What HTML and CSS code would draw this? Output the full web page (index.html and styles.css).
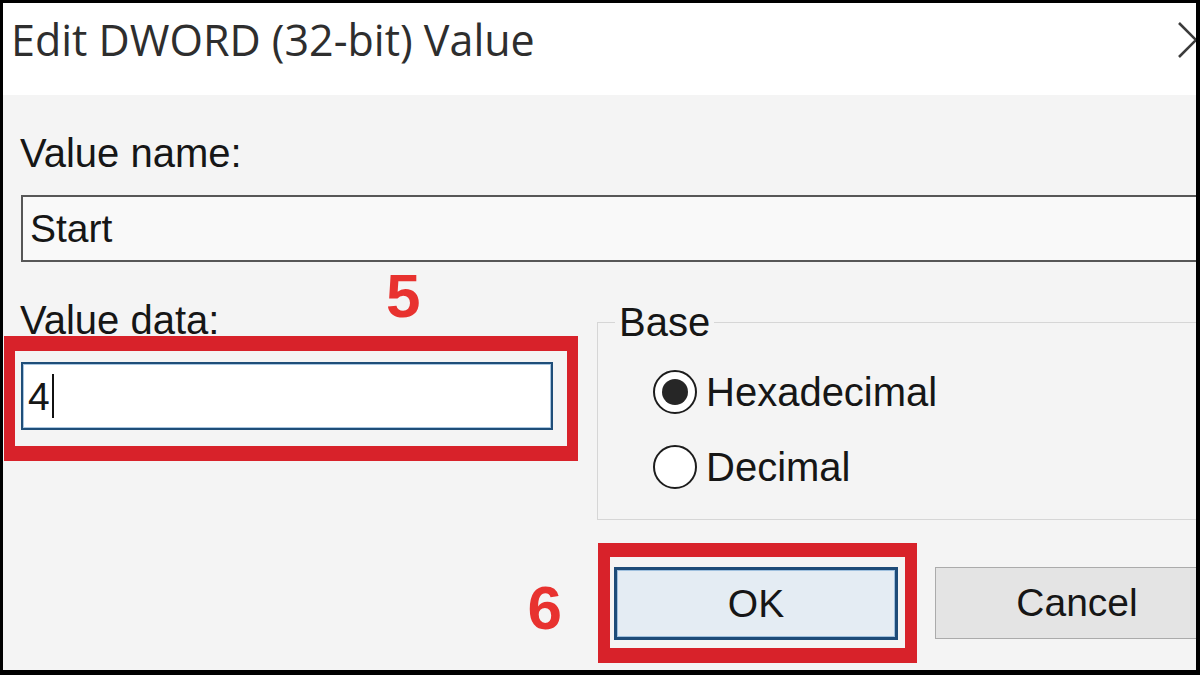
FILE: index.html
```html
<!DOCTYPE html>
<html lang="en">
<head>
    <meta charset="UTF-8">
    <meta name="viewport" content="width=device-width, initial-scale=1.0">
    <title>Edit DWORD (32-bit) Value</title>
    <link rel="stylesheet" href="styles.css">
</head>
<body>
    <div class="frame">
        <div class="titlebar">
            <h1 class="title">Edit DWORD (32-bit) Value</h1>
            <svg class="close" width="36" height="36" viewBox="0 0 36 36">
                <path d="M1 1 L35 35 M35 1 L1 35" stroke="#3c3c3c" stroke-width="2.6" fill="none"/>
            </svg>
        </div>

        <div class="dialog">
            <div class="label label-name">Value name:</div>
            <div class="textbox textbox-name">Start</div>

            <div class="grid">
                <div class="data-cell">
                    <span class="step step-5">5</span>
                    <div class="label">Value data:</div>
                    <div class="mark mark-data">
                        <div class="textbox textbox-data">
                            <span>4</span><span class="caret"></span>
                        </div>
                    </div>
                </div>

                <fieldset class="base">
                    <legend>Base</legend>
                    <div class="radio-list">
                        <div class="radio">
                            <span class="circle checked"></span>
                            <span>Hexadecimal</span>
                        </div>
                        <div class="radio">
                            <span class="circle"></span>
                            <span>Decimal</span>
                        </div>
                    </div>
                </fieldset>

                <div class="step-cell">
                    <span class="step">6</span>
                </div>

                <div class="buttons">
                    <div class="mark mark-ok">
                        <button class="btn btn-ok">OK</button>
                    </div>
                    <button class="btn btn-cancel">Cancel</button>
                </div>
            </div>
        </div>
    </div>
</body>
</html>
```

FILE: styles.css
```css
* {
    box-sizing: border-box;
}
body {
    margin: 0;
    background: #000;
    font-family: "Liberation Sans", Arial, sans-serif;
    color: #161616;
}
.frame {
    margin: 3px 4px 5px 3px;
    height: 667px;
    background: #f4f4f4;
    overflow: hidden;
}
.titlebar {
    height: 92px;
    background: #fff;
    display: flex;
    justify-content: space-between;
    align-items: flex-start;
    padding: 11px 0 0 8px;
}
.title {
    margin: 0;
    font-family: "Open Sans", "Noto Sans", sans-serif;
    font-weight: 400;
    font-size: 43px;
    line-height: 1.2;
    color: #2e2e2e;
}
.close {
    margin-top: 8px;
    margin-right: -18px;
    flex-shrink: 0;
}
.label {
    font-size: 40px;
    line-height: 46px;
    padding-left: 17px;
}
.label-name {
    margin-top: 35px;
}
.textbox {
    display: flex;
    align-items: center;
    font-size: 39px;
    line-height: 1;
}
.textbox-name {
    margin: 19px -20px 0 18px;
    height: 67px;
    border: 2px solid #575757;
    background: #f9f9f9;
    padding-left: 7px;
}
.grid {
    display: grid;
    grid-template-columns: 594px 1fr;
    row-gap: 23px;
    margin-top: 35px;
}
.data-cell {
    position: relative;
}
.step {
    font-weight: bold;
    font-size: 62px;
    line-height: 1;
    color: #e8322f;
}
.step-5 {
    position: absolute;
    left: 383px;
    top: -32px;
}
.mark {
    border: solid #d8222a;
}
.mark-data {
    margin: -7px 0 0 1px;
    width: 574px;
    height: 125px;
    border-width: 15px 11px;
    padding: 11px 0 0 6px;
}
.textbox-data {
    width: 532px;
    height: 68px;
    border: 2px solid #1f4e79;
    box-shadow: inset 0 0 0 1px #a9c6e0;
    background: #fff;
    padding-left: 5px;
}
.caret {
    display: inline-block;
    width: 2px;
    height: 44px;
    margin-left: 2px;
    background: #111;
}
.base {
    margin: 2px -12px 0 0;
    border: 1px solid #d6d6d6;
    padding: 0 0 29px 17px;
    min-width: 0;
}
.base legend {
    font-size: 40px;
    line-height: 46px;
    padding: 0 4px;
}
.radio-list {
    display: flex;
    flex-direction: column;
    gap: 29px;
    padding: 24px 0 0 38px;
}
.radio {
    display: flex;
    align-items: center;
    gap: 9px;
    font-size: 40px;
    line-height: 46px;
}
.circle {
    width: 44px;
    height: 44px;
    border: 2.5px solid #1c1c1c;
    border-radius: 50%;
    background: #fff;
    display: flex;
    align-items: center;
    justify-content: center;
}
.circle.checked::after {
    content: "";
    width: 26px;
    height: 26px;
    border-radius: 50%;
    background: #262626;
}
.step-cell {
    display: flex;
    justify-content: flex-end;
    align-items: center;
    padding: 10px 35px 0 0;
}
.buttons {
    display: flex;
    align-items: center;
    gap: 18px;
    margin: 0 -300px 0 1px;
}
.mark-ok {
    flex-shrink: 0;
    width: 319px;
    height: 120px;
    border-width: 14px 12px 15px;
    padding: 10px 0 0 4px;
}
.btn {
    flex-shrink: 0;
    width: 284px;
    height: 73px;
    font-family: "Liberation Sans", Arial, sans-serif;
    font-size: 39px;
    color: #161616;
    padding: 0;
}
.btn-ok {
    border: 3px solid #1d4b78;
    box-shadow: inset 0 0 0 1px #9fc0de;
    background: #e4ecf3;
}
.btn-cancel {
    height: 72px;
    border: 1px solid #ababab;
    background: #e4e4e4;
}
```
